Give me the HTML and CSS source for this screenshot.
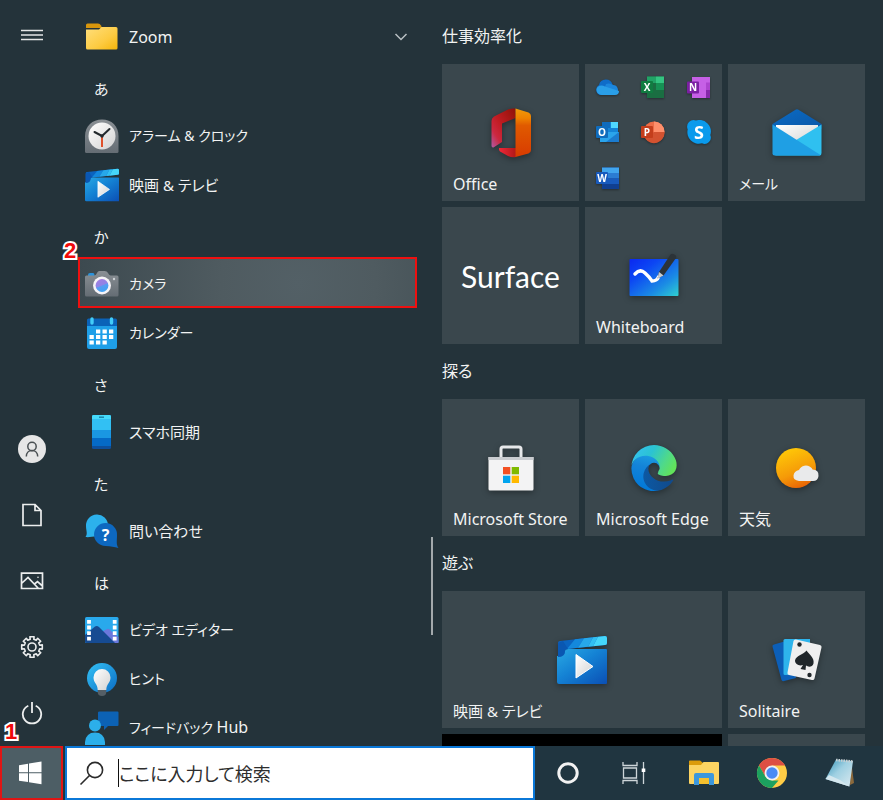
FILE: index.html
```html
<!DOCTYPE html>
<html lang="ja">
<head>
<meta charset="utf-8">
<meta name="viewport" content="width=device-width, initial-scale=1">
<title>スタート</title>
<link rel="stylesheet" href="styles.css">
</head>
<body>
<svg class="defs" aria-hidden="true">
  <defs>
    <linearGradient id="gFolder" x1="0" y1="0" x2="1" y2="1"><stop offset="0" stop-color="#ffdf7c"/><stop offset=".6" stop-color="#fdcb42"/><stop offset="1" stop-color="#f5b50a"/></linearGradient>
    <linearGradient id="gGrey" x1="0" y1="0" x2="0" y2="1"><stop offset="0" stop-color="#8a9095"/><stop offset="1" stop-color="#656d74"/></linearGradient>
    <linearGradient id="gFace" x1="0" y1="0" x2="1" y2="1"><stop offset="0" stop-color="#ffffff"/><stop offset="1" stop-color="#d2d2d2"/></linearGradient>
    <linearGradient id="gMovie" x1="0" y1="0" x2="1" y2="1"><stop offset="0" stop-color="#2aa9e4"/><stop offset=".45" stop-color="#1482d4"/><stop offset="1" stop-color="#0b4fb4"/></linearGradient>
    <linearGradient id="gLens" x1=".3" y1="0" x2=".7" y2="1"><stop offset="0" stop-color="#a27de0"/><stop offset=".48" stop-color="#8f84e6"/><stop offset=".52" stop-color="#5b9cf0"/><stop offset="1" stop-color="#3ba4f5"/></linearGradient>
    <linearGradient id="gSky" x1="0" y1="0" x2="1" y2="1"><stop offset="0" stop-color="#35c2f5"/><stop offset="1" stop-color="#0a6cc4"/></linearGradient>
    <linearGradient id="gBlue" x1="0" y1="0" x2="1" y2="1"><stop offset="0" stop-color="#0b6bc4"/><stop offset="1" stop-color="#0a57a8"/></linearGradient>
    <linearGradient id="gBoard" x1="0" y1="0" x2="1" y2="1"><stop offset="0" stop-color="#0a28f0"/><stop offset=".3" stop-color="#0c46f4"/><stop offset=".7" stop-color="#1b8ce4"/><stop offset="1" stop-color="#2fd0d0"/></linearGradient>
    <linearGradient id="gSun" x1=".3" y1="0" x2=".7" y2="1"><stop offset="0" stop-color="#ffc907"/><stop offset=".6" stop-color="#f59a08"/><stop offset="1" stop-color="#e85f05"/></linearGradient>
    <linearGradient id="gOffA" x1="1" y1="0" x2="0" y2="1"><stop offset="0" stop-color="#8e1208"/><stop offset=".5" stop-color="#c01c22"/><stop offset=".75" stop-color="#cc2840"/><stop offset="1" stop-color="#b35ba8"/></linearGradient>
    <linearGradient id="gOffB" x1="0" y1="0" x2="0" y2="1"><stop offset="0" stop-color="#f09a0a"/><stop offset=".2" stop-color="#ee8200"/><stop offset=".35" stop-color="#e05a00"/><stop offset="1" stop-color="#d83b01"/></linearGradient>
    <linearGradient id="gOffC" x1="0" y1="0" x2="1" y2="0"><stop offset="0" stop-color="#f0283a"/><stop offset="1" stop-color="#b01818"/></linearGradient>
    <linearGradient id="gEdgeA" x1="0" y1="0" x2="1" y2="0"><stop offset="0" stop-color="#0c59a4"/><stop offset="1" stop-color="#114a8b"/></linearGradient>
    <linearGradient id="gEdgeB" x1=".6" y1="0" x2=".4" y2="1"><stop offset="0" stop-color="#1b9de2"/><stop offset=".35" stop-color="#1484d8"/><stop offset="1" stop-color="#0078d8"/></linearGradient>
    <linearGradient id="gEdgeC" x1="0" y1=".2" x2="1" y2=".6"><stop offset="0" stop-color="#35c1f1"/><stop offset=".4" stop-color="#2bc3d2"/><stop offset=".75" stop-color="#4fd98a"/><stop offset="1" stop-color="#62e25a"/></linearGradient>
    <linearGradient id="gPad" x1="0" y1="0" x2="1" y2="1"><stop offset="0" stop-color="#2f8fb4"/><stop offset=".45" stop-color="#9fd0e2"/><stop offset="1" stop-color="#dceaf0"/></linearGradient>
    <symbol id="movies" viewBox="0 0 50 48">
      <path d="M1 7 Q1 5 3 5 L48 0 Q50 0 50 2 V8 Q50 9 48 9 L11 13 Q8 13 8 17 Q8 21 1 22Z" fill="#0b63bf"/>
      <path d="M18 3.3 27 2.3 21 11.8 10 13Z" fill="#1488dc"/><path d="M27 2.3 36 1.3 31 10.8 21 11.8Z" fill="#27a8ea"/>
      <path d="M36 1.3 41 .8 36 10.3 31 10.8Z" fill="#32bff2"/><path d="M41 .8 48 0 Q50 0 50 2 V7 Q50 9 48 9 L36 10.3Z" fill="#45d6fa"/>
      <path d="M0 20Q8 20 8 15 8 13 11 13H49Q50 13 50 14V47Q50 48 49 48H2Q0 48 0 46Z" fill="url(#gMovie)"/>
      <path d="M1 7V21Q8 21 8 15 8 13 11 13L6 5Z" fill="#0a57b2"/>
      <path d="M19 18.5 36 30.5 19 42Z" fill="url(#gFace)" stroke="#fff" stroke-linejoin="round"/>
    </symbol>
  </defs>
</svg>

<main class="start-menu">
  <nav class="rail" aria-label="スタート">
    <button class="rail-btn rail-menu" aria-label="展開"><svg width="24" height="14"><path d="M1 2.5H23M1 7H23M1 11.5H23" stroke="#e4e6e7" stroke-width="1.4"/></svg></button>
    <button class="rail-btn" aria-label="アカウント"><svg width="28" height="28" fill="none" stroke="#4a5053" stroke-width="1.5"><circle cx="14" cy="14" r="14" fill="#e6e6e6" stroke="none"/><circle cx="14" cy="11.5" r="4.2"/><path d="M8.3 21.5c0-3.5 2.2-6 5.7-6s5.700 2.500 5.700 6"/></svg></button>
    <button class="rail-btn" aria-label="ドキュメント"><svg width="22" height="24" fill="none" stroke="#eceeee" stroke-width="1.7"><path d="M2 1.500H14L20 7.500V22.500H2ZM14 1.500V7.500H20"/></svg></button>
    <button class="rail-btn" aria-label="ピクチャ"><svg width="24" height="18" fill="none" stroke="#eceeee" stroke-width="1.700"><path d="M1.500 1.200H22.500V16.500H1.500ZM1.500 11.500 8 5.500 18.500 16.500M14.500 12 17.500 9.500 22.500 14"/><circle cx="18" cy="5.300" r=".8" fill="#eceeee" stroke="none"/></svg></button>
    <button class="rail-btn" aria-label="設定"><svg width="24" height="24" viewBox="-12 -12 24 24" fill="none" stroke="#eceeee" stroke-width="1.600" stroke-linejoin="round"><path d="M7.700-1.800 10.300-2.100V2.100L7.700 1.800 6.700 4.200 8.700 5.700 5.700 8.700 4.200 6.700 1.800 7.700 2.100 10.300H-2.100L-1.800 7.700-4.200 6.700-5.700 8.700-8.700 5.700-6.700 4.200-7.700 1.800-10.300 2.100V-2.100L-7.700-1.800-6.700-4.200-8.700-5.700-5.700-8.700-4.200-6.700-1.800-7.700-2.100-10.300H2.100L1.800-7.700 4.200-6.700 5.700-8.700 8.700-5.700 6.700-4.200Z"/><circle r="4"/></svg></button>
    <button class="rail-btn" aria-label="電源"><svg width="22" height="24" fill="none" stroke="#eceeee" stroke-width="1.800"><path d="M11 1V12M7.300 4.800A9.200 9.200 0 1 0 14.700 4.800"/></svg></button>
  </nav>

  <section class="apps" aria-label="すべてのアプリ">
    <ul class="app-list">
      <li><button class="app"><svg class="app-icon" viewBox="0 0 34 34"><path d="M1 5Q1 3.500 2.500 3.500H13Q15 3.500 16 5.500L17 8H1Z" fill="#d8960c"/><path d="M1 9.500H14L16.500 7H31Q32.500 7 32.500 8.500V28Q32.500 29.500 31 29.500H2.500Q1 29.500 1 28Z" fill="url(#gFolder)"/></svg><span class="latin">Zoom</span><svg class="chevron" width="14" height="8" fill="none" stroke="#b9c0c3" stroke-width="1.500"><path d="M1.500 1 7 6.500 12.500 1"/></svg></button></li>
      <li><button class="letter">あ</button></li>
      <li><button class="app"><svg class="app-icon" viewBox="0 0 34 34"><path d="M0 17C0 7 7.500.500 17 .500S33.500 7 33.500 17V32.500Q33.500 34 32 34H1.500Q0 34 0 32.500Z" fill="url(#gGrey)"/><circle cx="17" cy="17" r="13.500" fill="url(#gFace)"/><path d="M9.500 13 17 17 24.500 10" fill="none" stroke="#23292d" stroke-width="2" stroke-linecap="round"/><path d="M17 17V28" stroke="#e0512c" stroke-width="2"/><circle cx="17" cy="17" r="1.700" fill="#23292d"/></svg><span class="kana">アラーム &amp; クロック</span></button></li>
      <li><button class="app"><svg class="app-icon"><use href="#movies"/></svg><span>映画 &amp; テレビ</span></button></li>
      <li><button class="letter">か</button></li>
      <li class="marked"><b class="step step-two">2</b><button class="app app-hover"><svg class="app-icon" viewBox="0 0 34 34"><path d="M3 8Q3 6 5 6H8Q9.500 6 9.500 9H3Z" fill="#2a93dc"/><path d="M0 10Q0 8.500 1.500 8.500H9Q11 8.500 12 6T15 4H19.500Q22 4 23 6T25.500 8.500H32Q33.500 8.500 33.500 10V28Q33.500 29.500 32 29.500H1.500Q0 29.500 0 28Z" fill="url(#gGrey)"/><circle cx="17" cy="18.500" r="9" fill="#f5f3f7"/><circle cx="17" cy="18.500" r="6.400" fill="url(#gLens)"/><circle cx="29" cy="12" r="1.200" fill="#cdd2d5"/></svg><span class="kana">カメラ</span></button></li>
      <li><button class="app"><svg class="app-icon" viewBox="0 0 34 34"><path d="M2 4Q2 2.500 3.500 2.500H30.500Q32 2.500 32 4V12H2Z" fill="#0a62b8"/><path d="M2 10H32V31Q32 33 30 33H4Q2 33 2 31Z" fill="#1f9fe8"/><path d="M7 3V7M26.500 3V7" stroke="#42ccf8" stroke-width="3.400" stroke-linecap="round"/><path d="M11 15.500H29M4.500 21H29M4.500 26.500H23" stroke="#fff" stroke-width="4" stroke-dasharray="4.300 2.200"/></svg><span class="kana">カレンダー</span></button></li>
      <li><button class="letter">さ</button></li>
      <li><button class="app"><svg class="app-icon" viewBox="0 0 34 34"><rect x="7" y="0" width="19" height="34" rx="1.500" fill="#0d4f9c"/><path d="M7 1.500Q7 0 8.500 0H24.500Q26 0 26 1.500V16H7Z" fill="#32c0f3"/><path d="M7 1.500Q7 0 8.500 0H24.500Q26 0 26 1.500V4H7Z" fill="#45dafa"/><path d="M7 15H26V24H7Z" fill="#1a97e2"/><path d="M7 23H26V31H7Z" fill="#056ac6"/><path d="M14 2.200H19" stroke="#187fa5" stroke-width="1.400"/></svg><span>スマホ同期</span></button></li>
      <li><button class="letter">た</button></li>
      <li><button class="app"><svg class="app-icon" viewBox="0 0 34 34"><path d="M.500 23C3 19.500 1 17 1 12A11 11 0 1 1 12 22.500C7 22.500 4 23.500.500 23Z" fill="#2cb1ec"/><path d="M33.500 34C31 30.500 32 27 32 21A11.500 11.500 0 1 0 20.500 32C26 32 29 33 33.500 34Z" fill="#0d68c0"/><text x="20.500" y="26.500" class="glyph" font-size="16">?</text></svg><span>問い合わせ</span></button></li>
      <li><button class="letter">は</button></li>
      <li><button class="app"><svg class="app-icon" viewBox="0 0 34 34"><rect y="4" width="33.500" height="26" rx="1.500" fill="#29a9ec"/><path d="M15 20 22 16Q24 15 26 18L33.500 24V30H19Z" fill="#6a78dc"/><path d="M0 22 10 13.500Q12 12.500 14 14L30 30H1.500Q0 30 0 28.500Z" fill="#164b92"/><path d="M4 7V29M29.700 7V29" stroke="#fff" stroke-width="3.800" stroke-dasharray="3.800 1.800"/></svg><span class="kana">ビデオ エディター</span></button></li>
      <li><button class="app"><svg class="app-icon" viewBox="0 0 34 34"><circle cx="17" cy="16" r="15" fill="url(#gSky)"/><path d="M12.700 28H21.300V30Q21.300 34 17 34T12.700 30Z" fill="#555f66"/><path d="M8.500 15.500A8.500 8.500 0 0 1 25.500 15.500C25.500 21 21.300 22 21.300 28H12.700C12.700 22 8.500 21 8.500 15.500Z" fill="url(#gFace)"/></svg><span class="kana">ヒント</span></button></li>
      <li><button class="app"><svg class="app-icon" viewBox="0 0 34 34"><path d="M13 1.500Q13 .500 14.500.500H32.500Q33.500.500 33.500 1.500V14Q33.500 15 32.500 15H23L19 19V15H14.500Q13 15 13 14Z" fill="#0c62b4"/><circle cx="10" cy="14.500" r="6" fill="#2cafea"/><path d="M0 34V31Q1 21.500 10 21.500T20 31V34Z" fill="#2cafea"/></svg><span class="kana">フィードバック <span class="latin">Hub</span></span></button></li>
    </ul>
    <span class="scroll-thumb"></span>
  </section>

  <section class="tiles" aria-label="ピン留め">
    <h2 class="group-title">仕事効率化</h2>
    <div class="tile-grid">
      <button class="tile"><svg class="tile-icon" width="42" height="50"><path d="M25.500.500V10L12 15.500V34L3.500 39.500Q1.500 40 1.500 37.500V13Q1.500 10 4 8.500L18 1.500Q22 0 25.500.500Z" fill="url(#gOffA)"/><path d="M9 40H26V49Q22 50 18 48L10 43.500Q8.500 42 9 40Z" fill="url(#gOffC)"/><path d="M25.500.500 38.500 4.500Q41 5.500 41 8V42Q41 44.500 38.500 45.500L25.500 49Z" fill="url(#gOffB)"/></svg><span class="tile-label latin">Office</span></button>
      <div class="tile tile-folder">
        <svg class="mini" viewBox="0 0 24 24"><path d="M4 20A5.500 5.500 0 0 1 3 10 7 7 0 0 1 16.500 9.500L20 13 12 20Z" fill="#0f6cc8"/><path d="M10 9A7 7 0 0 1 17 10 5 5 0 0 1 20 19L9 12Z" fill="#1c86dc"/><path d="M1.500 12Q5 9.500 9 11.500L23 16Q23 20 19 20H5.500Q0 19 .500 14Z" fill="#2a9fe8"/></svg>
        <svg class="mini" viewBox="0 0 24 24"><path d="M6 1.500H23V23H6Z" fill="#1a6e42"/><path d="M6 1.500H15V8H6Z" fill="#21a366"/><path d="M15 1.500H23V8H15Z" fill="#34c481"/><path d="M15 8H23V15H15Z" fill="#169154"/><rect y="6" width="12" height="12" rx="1" fill="#107c41"/><text x="6" y="15.500" class="glyph" font-size="10">X</text></svg>
        <svg class="mini" viewBox="0 0 24 24"><path d="M5 2H23V23H5Z" fill="#c660e6"/><path d="M19 7.500H23V15H19Z" fill="#ad44cf"/><path d="M19 15H23V23H19Z" fill="#8628aa"/><rect y="6.500" width="12" height="12" rx="1" fill="#7b1fa2"/><text x="6" y="16" class="glyph" font-size="10">N</text></svg>
        <svg class="mini" viewBox="0 0 24 24"><path d="M6 2H22V14H6Z" fill="#1484d8"/><path d="M15 2H22V8H15Z" fill="#50d9ff"/><path d="M6 2H14V8H6Z" fill="#0f6bbd"/><path d="M4 12H23V22H4Z" fill="#2aa4ec"/><path d="M23 12V22H10Z" fill="#1b7cd0"/><rect y="6" width="12" height="12" rx="1" fill="#0f6cbd"/><text x="6" y="15.500" class="glyph" font-size="10">O</text></svg>
        <svg class="mini" viewBox="0 0 24 24"><circle cx="13" cy="12" r="10.500" fill="#ed6c47"/><path d="M13 1.500A10.500 10.500 0 0 1 23.500 12H13Z" fill="#ff8f6b"/><path d="M13 12H23.500A10.500 10.500 0 0 1 4 18Z" fill="#d35230"/><rect y="6" width="12" height="12" rx="1" fill="#c43e1c"/><text x="6" y="15.500" class="glyph" font-size="10">P</text></svg>
        <svg class="mini" viewBox="0 0 24 24"><path d="M2 2Q5-1 9 .500A11.500 11.500 0 0 1 23.300 15Q25 19 22 22T15 23.300A11.500 11.500 0 0 1 .700 9.500Q-1 5 2 2Z" fill="#0a9aec"/><text x="12" y="18.500" class="glyph" font-size="18">S</text></svg>
        <svg class="mini" viewBox="0 0 24 24"><path d="M6 1.500H23V23H6Z" fill="#103f91"/><path d="M6 1.500H23V7H6Z" fill="#41a5ee"/><path d="M6 7H23V12.500H6Z" fill="#2b7cd3"/><path d="M6 12.500H23V18H6Z" fill="#185abd"/><rect y="6" width="12" height="12" rx="1" fill="#185abd"/><text x="6" y="15.500" class="glyph" font-size="10">W</text></svg>
      </div>
      <button class="tile"><svg class="tile-icon" width="50" height="48"><path d="M.500 15 23.500.700Q25 0 26.500.700L49.500 15V20H.500Z" fill="url(#gBlue)"/><path d="M4 16H46V26L25 36 4 26Z" fill="url(#gFace)"/><path d="M49.500 15.500V44Q49.500 46.500 47.500 46.500H3L25 30.500Z" fill="#2fc0f0"/><path d="M.500 15.500 48.500 46Q48 46.500 47 46.500H2.500Q.500 46.500.500 44.500Z" fill="#1f9fe4"/></svg><span class="tile-label kana">メール</span></button>
      <button class="tile"><span class="tile-word">Surface</span></button>
      <button class="tile"><svg class="tile-icon" width="50" height="46"><rect x=".500" y="6" width="49" height="37" rx="1" fill="url(#gBoard)"/><path d="M6 21Q11 15.500 16 20T23 28Q28 28 29.500 24" fill="none" stroke="#fff" stroke-width="3.500" stroke-linecap="round"/><path d="M28.500 25.500 30 19 41.500 1.500Q43 0 45.500 1.500T47 5L34.500 22.500Z" fill="#2c3338"/><path d="M28.500 25.500 30 19 34.500 22.500Z" fill="#c9cdd0"/></svg><span class="tile-label latin">Whiteboard</span></button>
    </div>

    <h2 class="group-title">探る</h2>
    <div class="tile-grid">
      <button class="tile"><svg class="tile-icon" width="46" height="46"><path d="M13 15V4Q13 2 15 2H31Q33 2 33 4V15" fill="none" stroke="#e6e8ea" stroke-width="3"/><path d="M.500 12H45.500V44Q45.500 45.500 44 45.500H2Q.500 45.500.500 44Z" fill="#f3f3f4"/><path d="M.500 12H45.500V15H.500Z" fill="#c9ccd0"/><path d="M15 22H22.300V29.300H15Z" fill="#f25022"/><path d="M23.700 22H31V29.300H23.700Z" fill="#7fba00"/><path d="M15 30.700H22.300V38H15Z" fill="#00a4ef"/><path d="M23.700 30.700H31V38H23.700Z" fill="#ffb900"/></svg><span class="tile-label latin">Microsoft Store</span></button>
      <button class="tile"><svg class="tile-icon" width="46" height="46" viewBox="4 0 257 260"><path d="M235.680 195.460a93.730 93.730 0 0 1-10.540 4.710 101.870 101.870 0 0 1-35.900 6.460c-47.320 0-88.540-32.550-88.540-74.320A31.480 31.480 0 0 1 117.130 105c-42.800 1.800-53.800 46.400-53.800 72.530 0 73.880 68.090 81.370 82.760 81.370 7.910 0 19.840-2.300 27-4.560l1.310-.44a128.340 128.340 0 0 0 66.600-52.800 4 4 0 0 0-5.320-5.640z" fill="url(#gEdgeA)"/><path d="M110.340 246.340A79.200 79.200 0 0 1 87.600 225a80.720 80.720 0 0 1 29.530-120c3.120-1.470 8.450-4.130 15.540-4a32.350 32.350 0 0 1 25.690 13 31.880 31.880 0 0 1 6.360 18.660c0-.21 24.460-79.600-80-79.600-43.900 0-80 41.660-80 78.210a130.150 130.150 0 0 0 12.110 56 128 128 0 0 0 156.380 67.110 75.550 75.550 0 0 1-62.780-8z" fill="url(#gEdgeB)"/><path d="M156.940 153.780c-.81 1.050-3.300 2.500-3.300 5.660 0 2.610 1.700 5.120 4.720 7.230 14.380 10 41.490 8.680 41.560 8.680a59.560 59.560 0 0 0 30.270-8.350 61.380 61.380 0 0 0 30.430-52.880c.26-22.410-8-37.310-11.340-43.910C228.090 28.760 182.350.2 132.610.2a128 128 0 0 0-128 126.200c.48-36.540 36.800-66.050 80-66.050 3.500 0 23.460.34 42 10.070 16.340 8.580 24.900 18.940 30.850 29.210 6.180 10.670 7.280 24.150 7.280 29.520s-2.740 13.330-7.800 19.830z" fill="url(#gEdgeC)"/></svg><span class="tile-label latin">Microsoft Edge</span></button>
      <button class="tile"><svg class="tile-icon" width="46" height="42"><circle cx="22" cy="21" r="20" fill="url(#gSun)"/><path d="M25 34Q19 33 19.500 28.500T25 23A7.500 7.500 0 0 1 37 20.500Q38 21 38.500 22.500 45 22.500 44.500 29 44 34 39 34Z" fill="#e9eaeb"/></svg><span class="tile-label latin">天気</span></button>
    </div>

    <h2 class="group-title">遊ぶ</h2>
    <div class="tile-grid">
      <button class="tile tile-wide"><svg class="tile-icon" width="50" height="48"><use href="#movies"/></svg><span class="tile-label">映画 &amp; テレビ</span></button>
      <button class="tile"><svg class="tile-icon" width="50" height="44"><path d="M.500 8.500Q0 7 2 6.500L14 3 24 40 12 43Q10 43.500 9.500 42Z" fill="#0c5fb8"/><path d="M11.500 2.500Q11.500 1 13 1H38V36L13 37Q11.500 37 11.500 35.500Z" fill="#2eb4ec"/><path d="M21.500 3Q22 1 24 1.500L48 7Q50 7.500 49.500 9.500L42.500 40.500Q42 42.500 40 42L17 37Q15 36.500 15.500 34.500Z" fill="#efefef"/><path d="M34.500 12.500C38 17 42.500 20 41.500 25.500 40.500 29 36.500 29.500 34 27.500L33.500 32 28.500 31 31 27C27 28.500 23 26 23 22.500 24 17.500 31 17 34.500 12.500Z" fill="#20262a"/><circle cx="27.500" cy="6.500" r="2.200" fill="#20262a"/><circle cx="37.500" cy="37" r="2.200" fill="#20262a"/></svg><span class="tile-label latin">Solitaire</span></button>
      <div class="tile tile-wide tile-black"></div>
      <div class="tile"></div>
    </div>
  </section>
</main>

<footer class="taskbar">
  <b class="step step-one">1</b>
  <button class="start" aria-label="スタート"><svg width="24" height="24"><path d="M1 4.200 10 2.700V11.300H1ZM11 2.500 23.500.500V11.300H11ZM1 12.300H10V21L1 19.700ZM11 12.300H23.500V23.300L11 21.300Z" fill="#fff"/></svg></button>
  <label class="search">
    <svg width="26" height="26" fill="none" stroke="#2b2b2b" stroke-width="1.600"><circle cx="16" cy="10" r="7.600"/><path d="M10.500 15.500 1.500 24.500"/></svg>
    <input type="text" placeholder="ここに入力して検索" aria-label="検索">
  </label>
  <button class="task task-system" aria-label="Cortana"><svg width="24" height="24"><circle cx="12" cy="12" r="9.200" fill="none" stroke="#f2f2f2" stroke-width="3"/></svg></button>
  <button class="task task-system" aria-label="タスク ビュー"><svg width="26" height="24" fill="none" stroke="#cdd5d9" stroke-width="1.300"><path d="M2 1V4.500H16V1M2 23V19.500H16V23M2.500 7H15.500V17H2.500ZM22.500 1V23"/><path d="M20.700 7.500H24.300V11H20.700Z" fill="#fff" stroke="none"/></svg></button>
  <div class="pinned">
    <button class="task" aria-label="エクスプローラー"><svg width="30" height="26"><path d="M0 1Q0 .500 1 .500H11L14 3V8H0Z" fill="#dc9c0a"/><path d="M0 5H12L14.500 2H29Q30 2 30 3V23Q30 24 29 24H1Q0 24 0 23Z" fill="#fcd462"/><path d="M5 25V15Q5 13 7 13H23Q25 13 25 15V25H20V18H10V25Z" fill="#3c97dc"/><path d="M10 18H20V24H10Z" fill="#f5c02e"/></svg></button>
    <button class="task" aria-label="Google Chrome"><svg width="32" height="32" viewBox="-16 -16 32 32"><circle r="15" fill="#ffcd46"/><path d="M-13-7.500A15 15 0 0 1 13-7.500H0L-6.500 3.700Z" fill="#dd4f43"/><path d="M-13-7.500-6.500 3.700 0 7.500H6.500L0 15A15 15 0 0 1-13-7.500Z" fill="#1ca15f"/><circle r="7.500" fill="#f1f1f1"/><circle r="5.700" fill="#4a8af4"/></svg></button>
    <button class="task" aria-label="メモ帳"><svg width="32" height="32"><path d="M27 3 30 26 26 28Z" fill="#8c6a3c"/><path d="M12 2.500 29 4 25.500 29.500 1.500 22Z" fill="url(#gPad)"/><path d="M1.500 22 5 18 16 23 25.500 29.500Z" fill="#d4e7ee"/><path d="M12 3 29 4.500" stroke="#c7cfd2" stroke-width="2.600" stroke-dasharray="1.500 1"/></svg></button>
  </div>
</footer>
</body>
</html>
```

FILE: styles.css
```css
* {
  box-sizing: border-box;
}

body {
  margin: 0;
  height: 100vh;
  display: flex;
  flex-direction: column;
  overflow: hidden;
  background: #24333a;
  color: #f2f3f3;
  font-family: "Noto Sans", "Noto Sans CJK JP", sans-serif;
  font-size: 15px;
  line-height: 20px;
  font-feature-settings: "palt";
}

button {
  margin: 0;
  padding: 0;
  border: 0;
  background: none;
  color: inherit;
  font: inherit;
  font-feature-settings: inherit;
  text-align: left;
}

svg {
  display: block;
  flex: none;
}

.defs {
  position: absolute;
  width: 0;
  height: 0;
}

.glyph {
  fill: #fff;
  font-family: "Open Sans", sans-serif;
  font-weight: 700;
  text-anchor: middle;
}

.kana {
  font-size: 14px;
}

.latin {
  font-size: 16px;
}

/* Start menu */
.start-menu {
  flex: 1;
  min-height: 0;
  display: grid;
  grid-template-columns: 64px minmax(0, 6fr) minmax(0, 7fr);
  grid-template-rows: minmax(0, 1fr);
  overflow: hidden;
}

.rail {
  display: flex;
  flex-direction: column;
}

.rail-btn {
  height: 66px;
  display: grid;
  place-items: center;
}

.rail-menu {
  height: 70px;
  margin-bottom: auto;
}

.apps {
  position: relative;
  padding: 12px 25px 0 14px;
}

.app-list {
  margin: 0;
  padding: 0;
  list-style: none;
}

.app {
  display: flex;
  align-items: center;
  gap: 10px;
  width: 100%;
  height: 49px;
  padding: 0 9px 0 7px;
}

.app-icon {
  width: 34px;
  height: 34px;
}

.chevron {
  margin-left: auto;
}

.letter {
  display: block;
  width: 100%;
  height: 50px;
  padding: 5px 0 0 16px;
}

.app-hover {
  background: radial-gradient(circle at 65% 50%, #536066 0, #4f5b60 35%, #3c494f 100%);
}

.marked {
  position: relative;
}

.marked::after {
  content: "";
  position: absolute;
  inset: -2px 0 0;
  border: 2px solid #ee1010;
}

.step {
  position: absolute;
  color: #f00a0a;
  font-family: "Liberation Sans", sans-serif;
  font-size: 22px;
  line-height: 24px;
  -webkit-text-stroke: 4px #fff;
  paint-order: stroke fill;
}

.step-two {
  left: -14px;
  top: -20px;
}

.scroll-thumb {
  position: absolute;
  right: 9px;
  top: 72%;
  width: 2px;
  height: 98px;
  background: #a3a9ac;
}

/* Tiles */
.tiles {
  overflow: hidden;
  padding: 9px 18px 0 0;
}

.group-title {
  margin: 0;
  font-size: 16px;
  font-weight: 400;
  line-height: 55px;
}

.tile-grid {
  display: grid;
  grid-template-columns: repeat(3, minmax(0, 1fr));
  grid-auto-rows: 137px;
  gap: 6px;
}

.tile {
  display: grid;
  background: #3a474d;
}

.tile-wide {
  grid-column: span 2;
}

.tile-black {
  background: #000;
}

.tile-icon,
.tile-label,
.tile-word {
  grid-area: 1 / 1;
}

.tile-icon,
.tile-word {
  place-self: center;
}

.tile-icon {
  filter: drop-shadow(0 2px 3px rgb(0 0 0 / 35%));
}

.tile-label {
  align-self: end;
  padding: 0 0 7px 11px;
}

.tile-word {
  color: #fff;
  font-family: Lato, sans-serif;
  font-size: 30px;
  line-height: 40px;
}

.tile-folder {
  grid-template: repeat(3, 1fr) / repeat(3, 1fr);
  place-items: center;
}

.mini {
  width: 24px;
  height: 24px;
  filter: drop-shadow(0 1px 1px rgb(0 0 0 / 35%));
}

/* Taskbar */
.taskbar {
  position: relative;
  flex: none;
  display: flex;
  height: 54px;
  padding-right: 9px;
  background: #203540;
}

.step-one {
  left: 5px;
  top: -26px;
}

.start {
  display: grid;
  place-items: center;
  width: 63px;
  margin-right: 2px;
  padding-right: 3px;
  border: 2px solid #e01515;
  background: #4d5e65;
}

.search {
  flex: 1;
  min-width: 0;
  display: flex;
  align-items: center;
  gap: 13px;
  padding-left: 12px;
  border: 2px solid #0b78d8;
  background: #fff;
}

.search input {
  flex: 1;
  min-width: 0;
  height: 28px;
  padding: 2px 0 0;
  border: 0;
  border-left: 1px solid #111;
  outline: 0;
  background: none;
  color: #111;
  font: inherit;
  font-size: 18px;
  font-feature-settings: inherit;
}

.search input::placeholder {
  color: #2e2e2e;
  opacity: 1;
}

.task {
  display: grid;
  place-items: center;
  width: 68px;
}

.task-system {
  width: 66px;
}

.pinned {
  display: flex;
  margin-left: 3px;
}
```
